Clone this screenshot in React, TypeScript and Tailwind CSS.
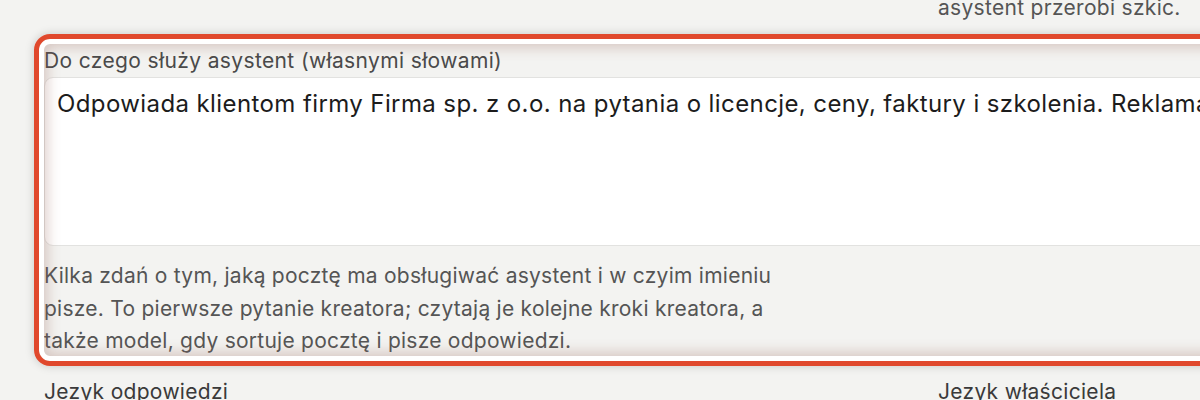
import React from "react";

export default function App() {
  return (
    <div className="relative h-[400px] w-[1200px] overflow-hidden bg-[#f3f3f1] font-['Inter','Noto_Sans',sans-serif] tracking-[0.3px]">
      <div className="w-[1500px] pl-[44px] pt-0">
        <div className="-mt-[8px] grid grid-cols-[894px_1fr]">
          <div />
          <p className="text-[21px] leading-[32px] text-[#555555]">asystent przerobi szkic.</p>
        </div>

        <div className="mt-[22px] flex flex-col">
          <label className="mb-[2px] text-[21px] leading-[29px] tracking-[0.37px] text-[#4a4a4a]">
            Do czego służy asystent (własnymi słowami)
          </label>
          <textarea
            readOnly
            wrap="off"
            className="h-[169px] w-[1400px] resize-none overflow-hidden rounded-[9px] border border-[#e2e2e0] bg-white px-[12px] pt-[10px] text-[24px] leading-[32px] tracking-[0.4px] text-[#1c1c1c] outline-none"
            defaultValue="Odpowiada klientom firmy Firma sp. z o.o. na pytania o licencje, ceny, faktury i szkolenia. Reklamacje przekazuje do działu obsługi."
          />
          <p className="mt-[14px] text-[21px] leading-[32.5px] tracking-[0.25px] text-[#555555]">
            Kilka zdań o tym, jaką pocztę ma obsługiwać asystent i w czyim imieniu
            <br />
            pisze. To pierwsze pytanie kreatora; czytają je kolejne kroki kreatora, a
            <br />
            także model, gdy sortuje pocztę i pisze odpowiedzi.
          </p>
        </div>

        <div className="mt-[19px] grid grid-cols-[894px_1fr]">
          <div className="text-[21px] leading-[29px] text-[#3a3a3a]">Jezyk odpowiedzi</div>
          <div className="text-[21px] leading-[29px] text-[#3a3a3a]">Jezyk właściciela</div>
        </div>
      </div>

      <div className="pointer-events-none absolute left-[34px] top-[34px] h-[332px] w-[1400px] rounded-[16px] border-[5px] border-[#e0482c] shadow-[0_0_10px_rgba(0,0,0,0.18),inset_0_0_0_5px_#ffffff,inset_0_0_14px_8px_rgba(150,95,85,0.32)]" />
    </div>
  );
}
